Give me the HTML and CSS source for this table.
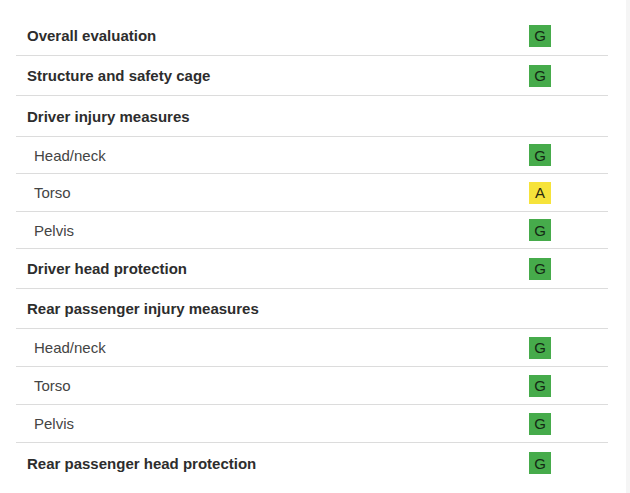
FILE: index.html
```html
<!DOCTYPE html>
<html>
<head>
<meta charset="utf-8">
<link rel="stylesheet" href="styles.css">
</head>
<body>
<div class="page">
  <div class="ratings">
    <div class="row head"><span class="label">Overall evaluation</span><span class="badge g">G</span></div>
    <div class="row head"><span class="label">Structure and safety cage</span><span class="badge g">G</span></div>
    <div class="row head tall"><span class="label">Driver injury measures</span></div>
    <div class="row sub short"><span class="label">Head/neck</span><span class="badge g">G</span></div>
    <div class="row sub"><span class="label">Torso</span><span class="badge a">A</span></div>
    <div class="row sub short"><span class="label">Pelvis</span><span class="badge g">G</span></div>
    <div class="row head"><span class="label">Driver head protection</span><span class="badge g">G</span></div>
    <div class="row head"><span class="label">Rear passenger injury measures</span></div>
    <div class="row sub"><span class="label">Head/neck</span><span class="badge g">G</span></div>
    <div class="row sub"><span class="label">Torso</span><span class="badge g">G</span></div>
    <div class="row sub"><span class="label">Pelvis</span><span class="badge g">G</span></div>
    <div class="row head last"><span class="label">Rear passenger head protection</span><span class="badge g">G</span></div>
  </div>
</div>
<div class="edge"></div>
</body>
</html>
```
FILE: styles.css
```css
html, body {
  margin: 0;
  padding: 0;
  background: #fff;
  height: 100%;
}
body {
  display: flex;
  font-family: "Liberation Sans", Arial, sans-serif;
  color: #333;
}
.page {
  width: 626px;
  padding: 16px 0 0 16px;
  box-sizing: border-box;
}
.edge {
  flex: 1;
  background: #f5f5f5;
}
.ratings {
  width: 592px;
}
.row {
  display: flex;
  align-items: center;
  border-bottom: 1px solid #dcdcdc;
  box-sizing: border-box;
}
.row.head {
  height: 40px;
  padding-left: 11px;
  font-weight: bold;
  font-size: 15px;
  color: #2d2d2d;
}
.row.tall {
  height: 41px;
}
.row.sub {
  height: 38px;
  padding-left: 18px;
  font-size: 15px;
  color: #444;
}
.row.short {
  height: 37px;
}
.row.last {
  border-bottom: none;
}
.label {
  flex: 1;
}
.badge {
  width: 22px;
  height: 22px;
  margin-right: 57px;
  display: flex;
  align-items: center;
  justify-content: center;
  font-size: 15px;
  font-weight: normal;
  color: #142814;
}
.badge.g {
  background: #46ab4b;
}
.badge.a {
  background: #f6e33a;
  color: #2a2a10;
}
```
